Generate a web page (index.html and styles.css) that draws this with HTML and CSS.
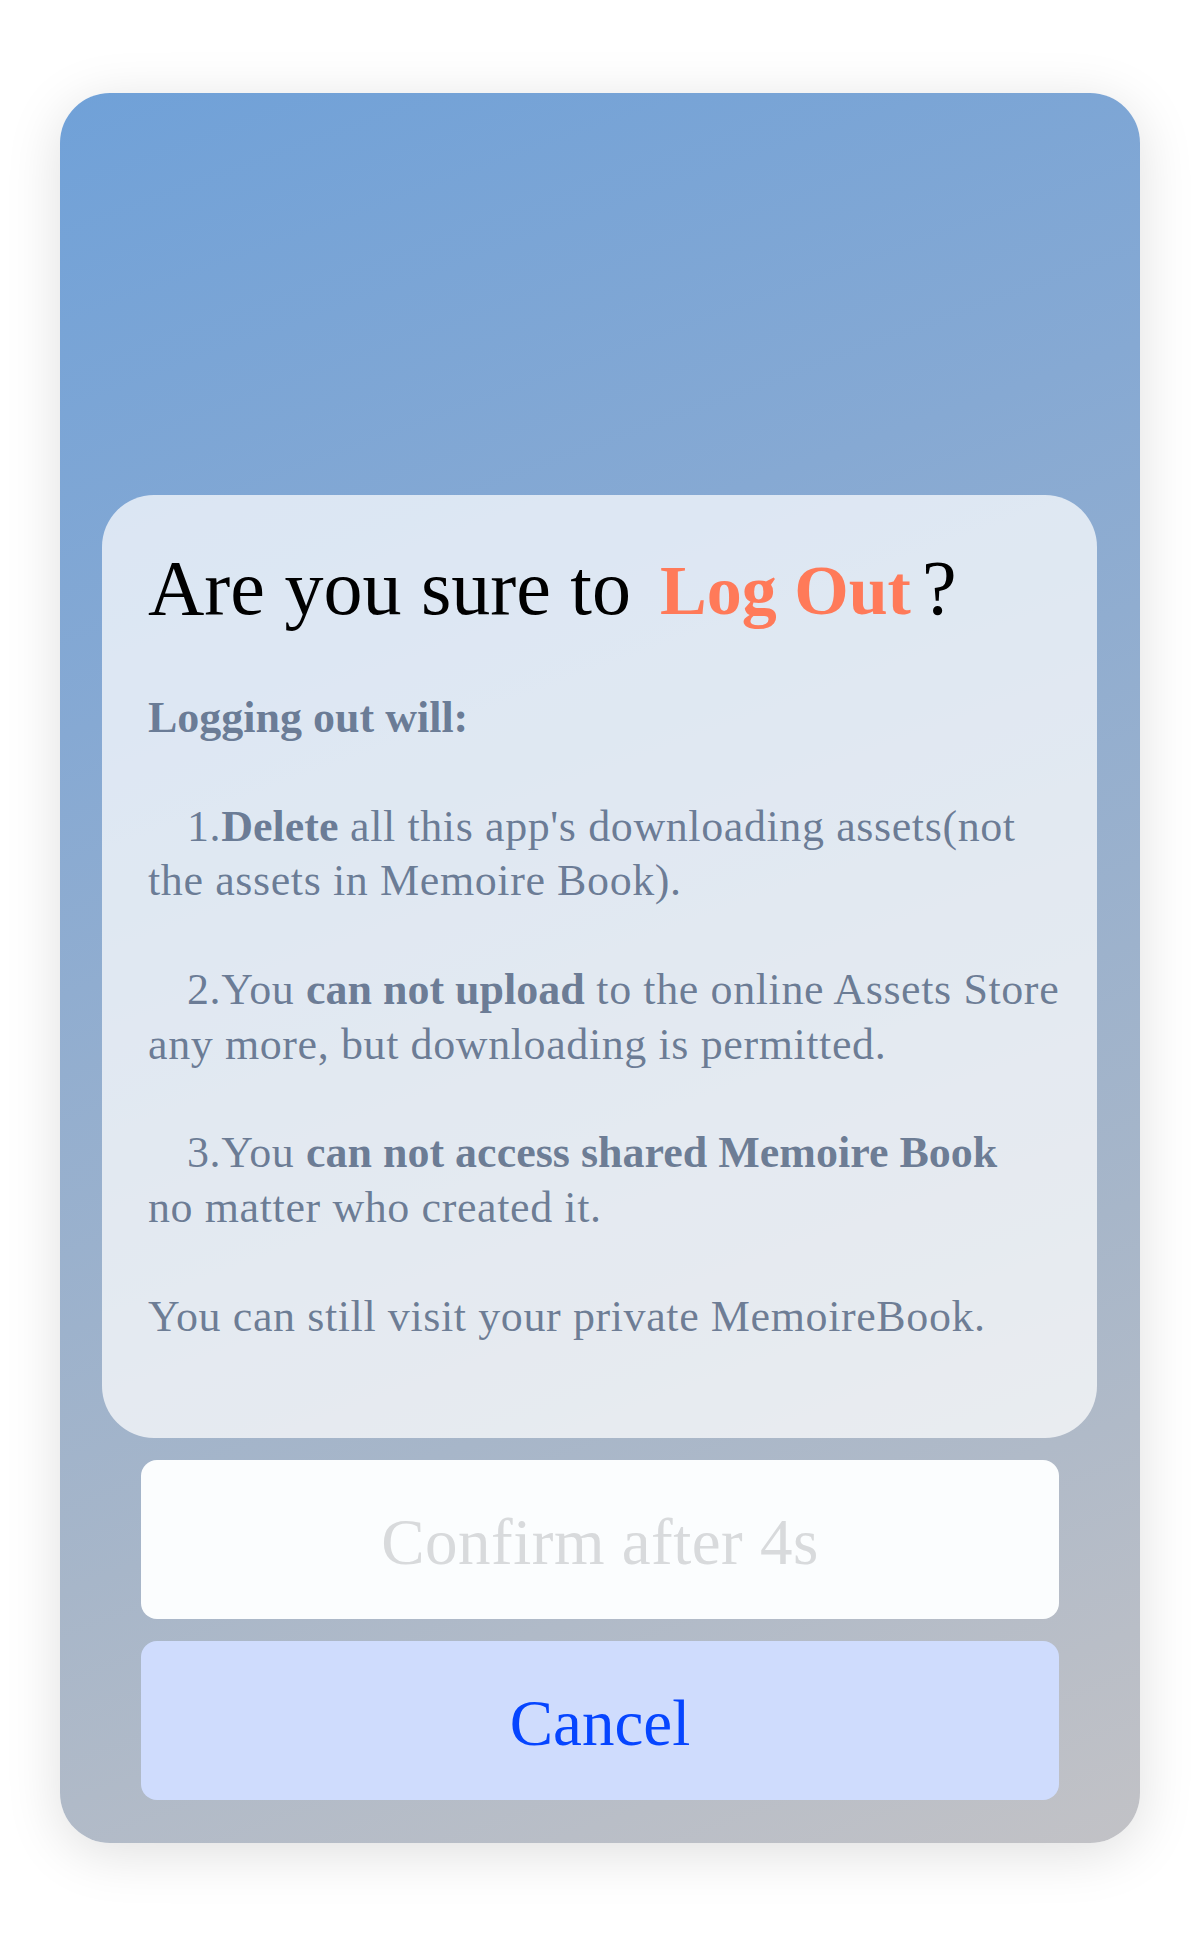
FILE: index.html
```html
<!DOCTYPE html>
<html lang="en">
<head>
<meta charset="utf-8">
<title>Log Out</title>
<link rel="stylesheet" href="styles.css">
</head>
<body>
<div class="page">
  <div class="sheet">
    <div class="card">
      <h1 class="title">Are you sure to<span class="hl">Log Out</span><span class="q">?</span></h1>
      <div class="body">
        <p class="head">Logging out will:</p>
        <p class="item"><span class="ind">1.</span><b>Delete</b> all this app's downloading assets(not<br>the assets in Memoire Book).</p>
        <p class="item"><span class="ind">2.You</span> <b>can not upload</b> to the online Assets Store<br>any more, but downloading is permitted.</p>
        <p class="item"><span class="ind">3.You</span> <b>can not access shared Memoire Book</b><br>no matter who created it.</p>
        <p class="item">You can still visit your private MemoireBook.</p>
      </div>
    </div>
    <div class="actions">
      <button class="btn confirm" type="button">Confirm after 4s</button>
      <button class="btn cancel" type="button">Cancel</button>
    </div>
  </div>
</div>
</body>
</html>
```

FILE: styles.css
```css
* { box-sizing: border-box; }

html, body {
  margin: 0;
  padding: 0;
  background: #ffffff;
}

body {
  font-family: "Liberation Serif", "Times New Roman", serif;
}

.page {
  width: 1200px;
  height: 1935px;
  padding: 93px 60px 0 60px;
}

.sheet {
  width: 1080px;
  height: 1750px;
  border-radius: 50px;
  background: linear-gradient(160deg, #70a1d8 0%, #86a9d3 30%, #a7b6c9 70%, #c2c2c6 100%);
  box-shadow: 0 10px 55px rgba(0, 0, 0, 0.13);
  display: flex;
  flex-direction: column;
  justify-content: flex-end;
  gap: 22px;
  padding: 0 43px 43px 42px;
}

.card {
  border-radius: 52px;
  background: rgba(255, 255, 255, 0.72);
  padding: 48px 40px 94px 46px;
}

.title {
  margin: 0 0 55px 0;
  font-size: 78px;
  line-height: 90px;
  font-weight: 400;
  color: #000;
  white-space: nowrap;
}

.title .hl {
  margin-left: 29px;
  font-size: 70px;
  font-weight: 700;
  color: #ff7a59;
}

.title .q {
  margin-left: 11px;
}

.body {
  display: flex;
  flex-direction: column;
  gap: 54.4px;
  font-size: 44px;
  letter-spacing: 0.6px;
  line-height: 54.4px;
  color: rgba(38, 60, 95, 0.63);
  white-space: nowrap;
}

.body p {
  margin: 0;
}

.body .head {
  font-weight: 700;
  letter-spacing: 0;
}

.body b {
  font-weight: 700;
  letter-spacing: 0;
}

.body .ind {
  margin-left: 39px;
}

.actions {
  display: flex;
  flex-direction: column;
  gap: 22px;
  padding: 0 38px 0 39px;
}

.btn {
  height: 159px;
  border: 0;
  border-radius: 16px;
  font-family: "Liberation Serif", "Times New Roman", serif;
  font-size: 65px;
  padding: 5px 0 0 0;
  text-align: center;
}

.confirm {
  background: #fbfdfe;
  color: #d8dadc;
  letter-spacing: 0.5px;
}

.cancel {
  background: #cfdcfd;
  color: #0645ff;
}
```
